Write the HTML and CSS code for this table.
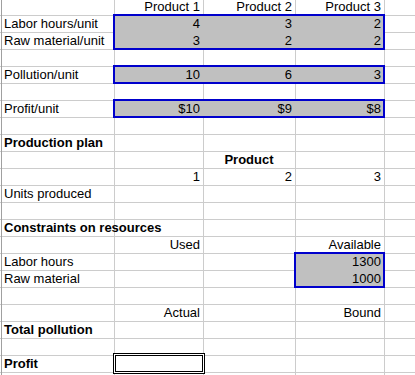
FILE: index.html
```html
<!DOCTYPE html>
<html lang="en">

<head>
    <meta charset="UTF-8">
    <meta name="viewport" content="width=device-width, initial-scale=1.0">
    <title>Pollution model</title>
    <link rel="stylesheet" href="styles.css">
</head>

<body>

    <div class="sheet">
        <!-- shaded input ranges -->
        <div class="range range-inputs"></div>
        <div class="range range-pollution"></div>
        <div class="range range-profit"></div>
        <div class="range range-available"></div>
        <div class="target-cell"></div>

        <div class="cell b r1 num">Product 1</div>
        <div class="cell c r1 num">Product 2</div>
        <div class="cell d r1 num">Product 3</div>

        <div class="cell a r2">Labor hours/unit</div>
        <div class="cell b r2 num">4</div>
        <div class="cell c r2 num">3</div>
        <div class="cell d r2 num">2</div>

        <div class="cell a r3">Raw material/unit</div>
        <div class="cell b r3 num">3</div>
        <div class="cell c r3 num">2</div>
        <div class="cell d r3 num">2</div>

        <div class="cell a r5">Pollution/unit</div>
        <div class="cell b r5 num">10</div>
        <div class="cell c r5 num">6</div>
        <div class="cell d r5 num">3</div>

        <div class="cell a r7">Profit/unit</div>
        <div class="cell b r7 num">$10</div>
        <div class="cell c r7 num">$9</div>
        <div class="cell d r7 num">$8</div>

        <div class="cell a r9 bold">Production plan</div>

        <div class="cell across r10 bold">Product</div>

        <div class="cell b r11 num">1</div>
        <div class="cell c r11 num">2</div>
        <div class="cell d r11 num">3</div>

        <div class="cell a r12">Units produced</div>

        <div class="cell a r14 bold">Constraints on resources</div>

        <div class="cell b r15 num">Used</div>
        <div class="cell d r15 num">Available</div>

        <div class="cell a r16">Labor hours</div>
        <div class="cell d r16 num">1300</div>

        <div class="cell a r17">Raw material</div>
        <div class="cell d r17 num">1000</div>

        <div class="cell b r19 num">Actual</div>
        <div class="cell d r19 num">Bound</div>

        <div class="cell a r20 bold">Total pollution</div>

        <div class="cell a r22 bold">Profit</div>
    </div>

</body>

</html>
```

FILE: styles.css
```css
*,
*::before,
*::after {
    box-sizing: border-box;
}

body {
    margin: 0;
    padding: 0;
    background-color: white;
    color: black;
    font-family: 'Liberation Sans', Arial, sans-serif;
    font-size: 13px;
}

/* worksheet: gridlines drawn on the background */
.sheet {
    display: grid;
    grid-template-columns: 2px 113px 89px 92px 89px 1fr;
    grid-template-rows: 16px repeat(22, 17px);
    width: 415px;
    height: 375px;
    overflow: hidden;
    background:
        linear-gradient(#a0a0a0, #a0a0a0) 1px 0 / 1px 100% no-repeat,
        linear-gradient(#cccccc, #cccccc) 114px 0 / 1px 100% no-repeat,
        linear-gradient(#cccccc, #cccccc) 203px 0 / 1px 100% no-repeat,
        linear-gradient(#cccccc, #cccccc) 295px 0 / 1px 100% no-repeat,
        linear-gradient(#cccccc, #cccccc) 384px 0 / 1px 100% no-repeat,
        repeating-linear-gradient(transparent 0 15px, #cccccc 15px 16px, transparent 16px 17px),
        white;
}

.cell {
    display: flex;
    align-items: flex-end;
    padding: 0 4px 1px 2px;
    line-height: 16px;
    white-space: nowrap;
    min-width: 0;
}

.num {
    justify-content: flex-end;
}

.bold {
    font-weight: bold;
}

.across {
    grid-column: 3 / 6;
    justify-content: center;
}

.a { grid-column: 2; }
.b { grid-column: 3; }
.c { grid-column: 4; }
.d { grid-column: 5; }

.r1 { grid-row: 1; }
.r2 { grid-row: 2; }
.r3 { grid-row: 3; }
.r5 { grid-row: 5; }
.r7 { grid-row: 7; }
.r9 { grid-row: 9; }
.r10 { grid-row: 10; }
.r11 { grid-row: 11; }
.r12 { grid-row: 12; }
.r14 { grid-row: 14; }
.r15 { grid-row: 15; }
.r16 { grid-row: 16; }
.r17 { grid-row: 17; }
.r19 { grid-row: 19; }
.r20 { grid-row: 20; }
.r22 { grid-row: 22; }

/* shaded ranges with a medium blue outline */
.range {
    background-color: #c0c0c0;
    border: 2px solid #0000cc;
    margin: -2px 0 0 -2px;
}

.range-inputs {
    grid-column: 3 / 6;
    grid-row: 2 / 4;
}

.range-pollution {
    grid-column: 3 / 6;
    grid-row: 5;
}

.range-profit {
    grid-column: 3 / 6;
    grid-row: 7;
}

.range-available {
    grid-column: 5;
    grid-row: 16 / 18;
}

.target-cell {
    grid-column: 3;
    grid-row: 22;
    margin: -3px -1px -1px -2px;
    border: 3px double black;
    background-color: white;
}
```
